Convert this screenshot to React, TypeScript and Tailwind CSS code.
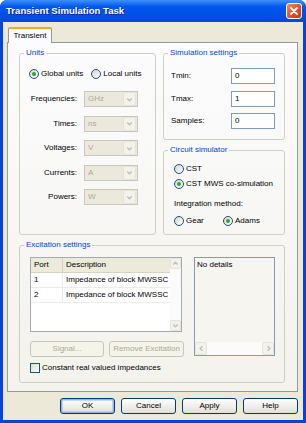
import React from 'react';

type ChevronDir = 'up' | 'down' | 'left' | 'right';

const chevronPaths: Record<ChevronDir, string> = {
  down: 'M2.5 4 L5 6.5 L7.5 4',
  up: 'M2.5 6 L5 3.5 L7.5 6',
  left: 'M6 2.5 L3.5 5 L6 7.5',
  right: 'M4 2.5 L6.5 5 L4 7.5',
};

const Chevron = ({ dir = 'down' }: { dir?: ChevronDir }) => (
  <svg width="9" height="9" viewBox="0 0 10 10">
    <path d={chevronPaths[dir]} fill="none" stroke="#c3c1b4" strokeWidth="1.6" />
  </svg>
);

const ArrowBox = ({ dir, className = '' }: { dir: ChevronDir; className?: string }) => (
  <div className={`flex items-center justify-center rounded-[2px] border border-[#e6e4da] bg-[#f3f2ec] ${className}`}>
    <Chevron dir={dir} />
  </div>
);

const Radio = ({ label, checked, className = '' }: { label: string; checked?: boolean; className?: string }) => (
  <div className={`flex items-center gap-[2px] h-[12px] ${className}`}>
    <span className="w-[10px] h-[10px] shrink-0 rounded-full border border-[#1c5180] bg-linear-to-br from-[#d6d5cc] to-white flex items-center justify-center">
      {checked && <span className="w-[4px] h-[4px] rounded-full bg-[#2fa62f]" />}
    </span>
    <span className="whitespace-nowrap">{label}</span>
  </div>
);

const Combo = ({ value }: { value: string }) => (
  <div className="w-[54px] h-[16px] border border-[#c9c7ba] bg-[#ebe9dc] flex items-center pr-[1px]">
    <span className="flex-1 pl-[3px] text-[#aca899]">{value}</span>
    <ArrowBox dir="down" className="w-[13px] h-[14px]" />
  </div>
);

const Field = ({ value }: { value: string }) => (
  <div className="w-[44px] h-[16px] border border-[#7f9db9] bg-white pl-[3px] flex items-center">{value}</div>
);

const XPButton = ({
  label, disabled, isDefault, className = '',
}: { label: string; disabled?: boolean; isDefault?: boolean; className?: string }) => (
  <div
    className={`h-[16px] rounded-[3px] border flex items-center justify-center ${
      disabled
        ? 'border-[#c9c7ba] bg-[#f5f4ea] text-[#aca899]'
        : 'border-[#003c74] bg-linear-to-b from-white to-[#e2e0d6] text-black'
    } ${isDefault ? 'shadow-[inset_0_0_0_1.5px_#92b5ea]' : ''} ${className}`}
  >
    {label}
  </div>
);

const Group = ({ title, className = '', children }: { title: string; className?: string; children: React.ReactNode }) => (
  <fieldset className={`border border-[#d0d0bf] rounded-[3px] min-w-0 ${className}`}>
    <legend className="ml-[4px] px-[2px] leading-[10px] text-[#0046d5]">{title}</legend>
    {children}
  </fieldset>
);

const units = [
  { label: 'Frequencies:', value: 'GHz' },
  { label: 'Times:', value: 'ns' },
  { label: 'Voltages:', value: 'V' },
  { label: 'Currents:', value: 'A' },
  { label: 'Powers:', value: 'W' },
];

const simSettings = [
  { label: 'Tmin:', value: '0' },
  { label: 'Tmax:', value: '1' },
  { label: 'Samples:', value: '0' },
];

const ports = [
  { port: '1', desc: 'Impedance of block MWSSC' },
  { port: '2', desc: 'Impedance of block MWSSC' },
];

export default function App() {
  return (
    <div className="w-[306px] h-[423px] flex flex-col bg-[#0842dd] rounded-t-[7px] overflow-hidden font-['Liberation_Sans',Arial,sans-serif] text-[8px] leading-[10px] text-black">
      {/* title bar */}
      <div className="h-[22px] shrink-0 flex items-center justify-between pl-[6px] pr-[4px] bg-linear-to-b from-[#3d8ffa] via-[#0058ee] via-30% to-[#0048dc]">
        <span className="text-white font-bold text-[9.6px] [text-shadow:1px_1px_#10248a]">Transient Simulation Task</span>
        <div className="w-[16px] h-[16px] rounded-[3px] border border-white bg-linear-to-br from-[#f08a6c] via-[#e0502f] to-[#c23b1c] flex items-center justify-center">
          <svg width="10" height="10" viewBox="0 0 10 10">
            <path d="M2 2 L8 8 M8 2 L2 8" stroke="white" strokeWidth="1.8" strokeLinecap="round" />
          </svg>
        </div>
      </div>

      {/* dialog body */}
      <div className="flex-1 mx-[3px] mb-[3px] bg-[#ece9d8] flex flex-col pt-[5px] pl-[4px] pr-[5px]">
        <div className="h-[15px] flex">
          <div className="ml-[1px] w-[44px] h-[16px] relative z-10 flex items-center justify-center bg-[#fcfcfe] border-x border-[#919b9c] border-t-2 border-t-[#f5a623] rounded-t-[2px]">
            Transient
          </div>
        </div>

        <div className="h-[350px] border border-[#919b9c] bg-linear-to-b from-[#fcfcfe] to-[#f3f2ec] pl-[11px] pt-[5px] flex flex-col">
          <div className="flex gap-[7px]">
            <Group title="Units" className="w-[137px] h-[187px]">
              <div className="flex items-center mt-[10px] pl-[9px]">
                <Radio label="Global units" checked />
                <Radio label="Local units" className="ml-[8px]" />
              </div>
              <div className="flex flex-col gap-[8.5px] mt-[11px]">
                {units.map((u) => (
                  <div key={u.label} className="flex items-center gap-[7px] h-[16px]">
                    <span className="w-[57px] text-right">{u.label}</span>
                    <Combo value={u.value} />
                  </div>
                ))}
              </div>
            </Group>

            <div className="w-[122px] flex flex-col gap-[5px]">
              <Group title="Simulation settings" className="h-[92px]">
                <div className="flex flex-col gap-[6.5px] mt-[10px]">
                  {simSettings.map((s) => (
                    <div key={s.label} className="flex items-center h-[16px] pl-[7px]">
                      <span className="w-[60px]">{s.label}</span>
                      <Field value={s.value} />
                    </div>
                  ))}
                </div>
              </Group>

              <Group title="Circuit simulator" className="h-[90px]">
                <div className="flex flex-col pl-[10px]">
                  <Radio label="CST" className="mt-[8px]" />
                  <Radio label="CST MWS co-simulation" checked className="mt-[3px]" />
                  <span className="mt-[9px]">Integration method:</span>
                  <div className="flex items-center mt-[6px]">
                    <Radio label="Gear" className="w-[49px]" />
                    <Radio label="Adams" checked />
                  </div>
                </div>
              </Group>
            </div>
          </div>

          <Group title="Excitation settings" className="w-[266px] h-[143px] mt-[5px]">
            <div className="flex gap-[9px] mt-[7px] pl-[10px]">
              <div className="w-[155px] flex flex-col">
                <div className="w-[152px] h-[75px] border border-[#a5a9b0] bg-white flex">
                  <div className="flex-1 flex flex-col">
                    <div className="h-[15px] flex bg-[#ebeadb] border-b border-[#d6d2c2]">
                      <span className="w-[32px] pl-[3px] flex items-center border-r border-[#d6d2c2]">Port</span>
                      <span className="flex-1 pl-[3px] flex items-center">Description</span>
                    </div>
                    {ports.map((p) => (
                      <div key={p.port} className="h-[15px] flex border-b border-[#ecebe8]">
                        <span className="w-[32px] pl-[3px] flex items-center border-r border-[#ecebe8]">{p.port}</span>
                        <span className="flex-1 pl-[3px] flex items-center whitespace-nowrap overflow-hidden">{p.desc}</span>
                      </div>
                    ))}
                  </div>
                  <div className="w-[11px] flex flex-col justify-between bg-[#fbfbf9]">
                    <ArrowBox dir="up" className="h-[11px]" />
                    <ArrowBox dir="down" className="h-[11px]" />
                  </div>
                </div>
                <div className="flex gap-[5px] mt-[9px]">
                  <XPButton label="Signal..." disabled className="w-[74px]" />
                  <XPButton label="Remove Excitation" disabled className="w-[75px]" />
                </div>
              </div>

              <div className="w-[81px] h-[99px] border border-[#7f9db9] bg-[#f6f5f0] flex flex-col">
                <span className="flex-1 pl-[2px] pt-[2px]">No details</span>
                <div className="h-[13px] flex justify-between bg-[#fbfbf9]">
                  <ArrowBox dir="left" className="w-[12px]" />
                  <ArrowBox dir="right" className="w-[12px]" />
                </div>
              </div>
            </div>

            <div className="flex items-center gap-[2px] mt-[6px] pl-[10px] h-[10px]">
              <span className="w-[10px] h-[10px] border border-[#1c5180] bg-linear-to-br from-[#dcdbd3] to-white" />
              <span>Constant real valued impedances</span>
            </div>
          </Group>
        </div>

        <div className="flex justify-end gap-[6px] mt-[6px]">
          <XPButton label="OK" isDefault className="w-[55px]" />
          <XPButton label="Cancel" className="w-[55px]" />
          <XPButton label="Apply" className="w-[55px]" />
          <XPButton label="Help" className="w-[55px]" />
        </div>
      </div>
    </div>
  );
}
